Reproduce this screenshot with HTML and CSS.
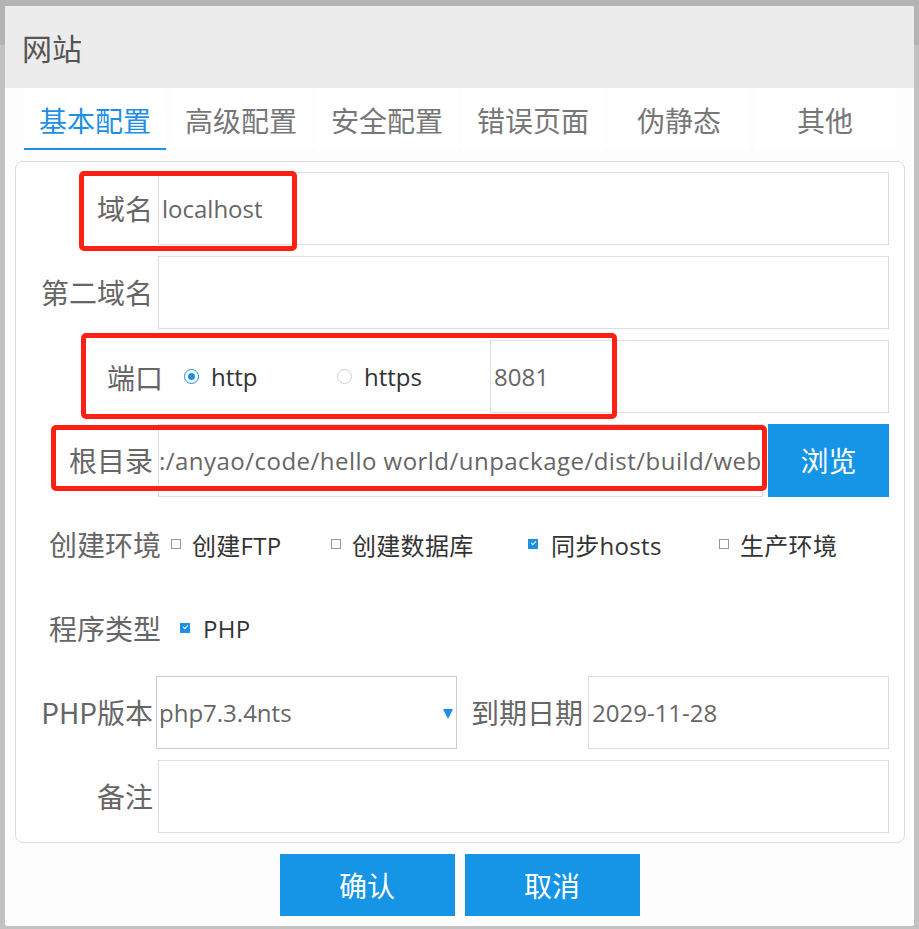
FILE: index.html
```html
<!DOCTYPE html>
<html lang="zh-CN">
<head>
<meta charset="utf-8">
<title>网站</title>
<link rel="stylesheet" href="styles.css">
</head>
<body>
<div class="backdrop-band"></div>
<div class="dialog">
  <div class="dialog-header">网站</div>
  <div class="tabs">
    <div class="tab active">基本配置</div>
    <div class="tab">高级配置</div>
    <div class="tab">安全配置</div>
    <div class="tab">错误页面</div>
    <div class="tab">伪静态</div>
    <div class="tab">其他</div>
  </div>
  <div class="panel">
    <div class="row">
      <div class="label">域名</div>
      <div class="field">localhost</div>
    </div>
    <div class="row">
      <div class="label">第二域名</div>
      <div class="field"></div>
    </div>
    <div class="row">
      <div class="port-group">
        <span class="port-label">端口</span>
        <span class="radio-opt"><span class="radio checked"></span><span class="opt-text">http</span></span>
        <span class="radio-opt"><span class="radio"></span><span class="opt-text">https</span></span>
      </div>
      <div class="field">8081</div>
    </div>
    <div class="row">
      <div class="label">根目录</div>
      <div class="field field-path">:/anyao/code/hello world/unpackage/dist/build/web</div>
      <div class="btn-browse">浏览</div>
    </div>
    <div class="row row-check">
      <div class="label label-wide">创建环境</div>
      <div class="checks">
        <span class="check-opt"><span class="checkbox"></span><span class="opt-text">创建FTP</span></span>
        <span class="check-opt"><span class="checkbox"></span><span class="opt-text">创建数据库</span></span>
        <span class="check-opt"><span class="checkbox checked"></span><span class="opt-text">同步hosts</span></span>
        <span class="check-opt"><span class="checkbox"></span><span class="opt-text">生产环境</span></span>
      </div>
    </div>
    <div class="row row-check">
      <div class="label label-wide">程序类型</div>
      <div class="checks checks-type">
        <span class="check-opt"><span class="checkbox checked"></span><span class="opt-text">PHP</span></span>
      </div>
    </div>
    <div class="row">
      <div class="label">PHP版本</div>
      <div class="select">php7.3.4nts<span class="caret"></span></div>
      <div class="label-inline">到期日期</div>
      <div class="field">2029-11-28</div>
    </div>
    <div class="row">
      <div class="label">备注</div>
      <div class="field"></div>
    </div>
  </div>
  <div class="actions">
    <div class="btn">确认</div>
    <div class="btn">取消</div>
  </div>
  <div class="mark mark-1"></div>
  <div class="mark mark-2"></div>
  <div class="mark mark-3"></div>
</div>
</body>
</html>
```
FILE: styles.css
```css
* { box-sizing: border-box; }
html, body {
  margin: 0;
  padding: 0;
  width: 919px;
  height: 929px;
  overflow: hidden;
}
body {
  background: #c2c2c2;
  font-family: "Open Sans", "Noto Sans CJK SC", sans-serif;
  position: relative;
  padding: 6px 5px 0 5px;
}
.backdrop-band {
  position: absolute;
  left: 0;
  top: 0;
  width: 919px;
  height: 45px;
  background: #b3b3b3;
}
.dialog {
  position: relative;
  width: 909px;
  height: 920px;
  background: #fdfdfd;
  border-radius: 2px;
  overflow: hidden;
}
.dialog-header {
  height: 82px;
  background: #ececec;
  color: #555;
  font-size: 30px;
  line-height: 82px;
  padding-left: 17px;
  font-family: "Noto Sans CJK SC", sans-serif;
}
.tabs {
  display: flex;
  gap: 4px;
  padding-left: 19px;
  height: 62px;
}
.tab {
  width: 142px;
  height: 62px;
  background: #fff;
  color: #777;
  font-size: 28px;
  line-height: 60px;
  padding-top: 2px;
  text-align: center;
  font-family: "Noto Sans CJK SC", sans-serif;
}
.tab.active {
  color: #1f8fe6;
  border-bottom: 2px solid #1f8fe6;
}
.panel {
  margin: 11px 9px 0 10px;
  height: 682px;
  border: 1px solid #dcdcdc;
  border-radius: 8px;
  padding: 10px 15px 0 0;
  display: flex;
  flex-direction: column;
  gap: 11px;
  background: #fefefe;
}
.row {
  display: flex;
  height: 73px;
  align-items: stretch;
}
.label {
  width: 142px;
  flex: none;
  text-align: right;
  padding-right: 5px;
  font-size: 28px;
  color: #666;
  line-height: 73px;
  font-family: "Noto Sans CJK SC", sans-serif;
  white-space: nowrap;
}
.label-wide {
  width: 150px;
  padding-right: 5px;
}
.field {
  flex: 1;
  border: 1px solid #dddddd;
  background: #fff;
  font-size: 24px;
  color: #666;
  line-height: 71px;
  padding-left: 3px;
  white-space: nowrap;
  overflow: hidden;
}
.field-path {
  margin-right: 5px;
  padding-left: 0;
  letter-spacing: 0.47px;
}
.btn-browse {
  width: 121px;
  flex: none;
  background: #1694e6;
  color: #fff;
  font-size: 28px;
  line-height: 73px;
  text-align: center;
  font-family: "Noto Sans CJK SC", sans-serif;
}
.port-group {
  display: flex;
  align-items: center;
  padding-left: 91px;
  width: 474px;
  flex: none;
}
.port-label {
  font-size: 28px;
  color: #666;
  font-family: "Noto Sans CJK SC", sans-serif;
  width: 77px;
}
.radio-opt {
  display: flex;
  align-items: center;
  width: 153px;
  flex: none;
}
.radio {
  width: 15px;
  height: 15px;
  border: 1px solid #cfcfcf;
  border-radius: 50%;
  background: #fff;
  position: relative;
  flex: none;
  margin-right: 12px;
}
.radio.checked {
  border-color: #1f8fe6;
}
.radio.checked::after {
  content: "";
  position: absolute;
  left: 3px;
  top: 3px;
  width: 7px;
  height: 7px;
  border-radius: 50%;
  background: #1f8fe6;
}
.opt-text {
  font-size: 24px;
  color: #333;
  white-space: nowrap;
}
.checks {
  display: grid;
  grid-template-columns: 160px 197px 191px auto;
  align-items: center;
  padding-left: 5px;
}
.checks-type {
  padding-left: 14px;
}
.check-opt {
  display: flex;
  align-items: center;
}
.checks .opt-text {
  letter-spacing: 0.3px;
}
.checkbox {
  width: 10px;
  height: 10px;
  border: 1px solid #9a9a9a;
  background: #fff;
  margin-right: 11px;
  flex: none;
  position: relative;
  top: -1px;
}
.checkbox.checked {
  background: #1f8fe6;
  border-color: #1f8fe6;
  margin-right: 13px;
}
.checkbox.checked::after {
  content: "";
  position: absolute;
  left: 2px;
  top: 1px;
  width: 4px;
  height: 2px;
  border-left: 1px solid #fff;
  border-bottom: 1px solid #fff;
  transform: rotate(-45deg);
}
.select {
  width: 301px;
  flex: none;
  border: 1px solid #cccccc;
  background: #fff;
  font-size: 24px;
  color: #666;
  line-height: 71px;
  padding-left: 2px;
  position: relative;
  margin-left: -2px;
}
.caret {
  position: absolute;
  right: 3px;
  top: 32px;
  width: 0;
  height: 0;
  border-left: 5.5px solid transparent;
  border-right: 5.5px solid transparent;
  border-top: 10px solid #1f8fe6;
}
.label-inline {
  flex: none;
  padding: 0 5px 0 14px;
  font-size: 28px;
  color: #666;
  line-height: 73px;
  font-family: "Noto Sans CJK SC", sans-serif;
}
.actions {
  display: flex;
  justify-content: center;
  gap: 10px;
  margin-top: 11px;
}
.btn {
  width: 175px;
  height: 62px;
  background: #1694e6;
  color: #fff;
  font-size: 28px;
  line-height: 62px;
  text-align: center;
  font-family: "Noto Sans CJK SC", sans-serif;
}
.mark {
  position: absolute;
  border: 5px solid #fe2013;
  border-radius: 5px;
  pointer-events: none;
}
.mark-1 { left: 74px; top: 165px; width: 218px; height: 80px; }
.mark-2 { left: 76px; top: 327px; width: 536px; height: 86px; }
.mark-3 { left: 46px; top: 419px; width: 716px; height: 66px; }
```
